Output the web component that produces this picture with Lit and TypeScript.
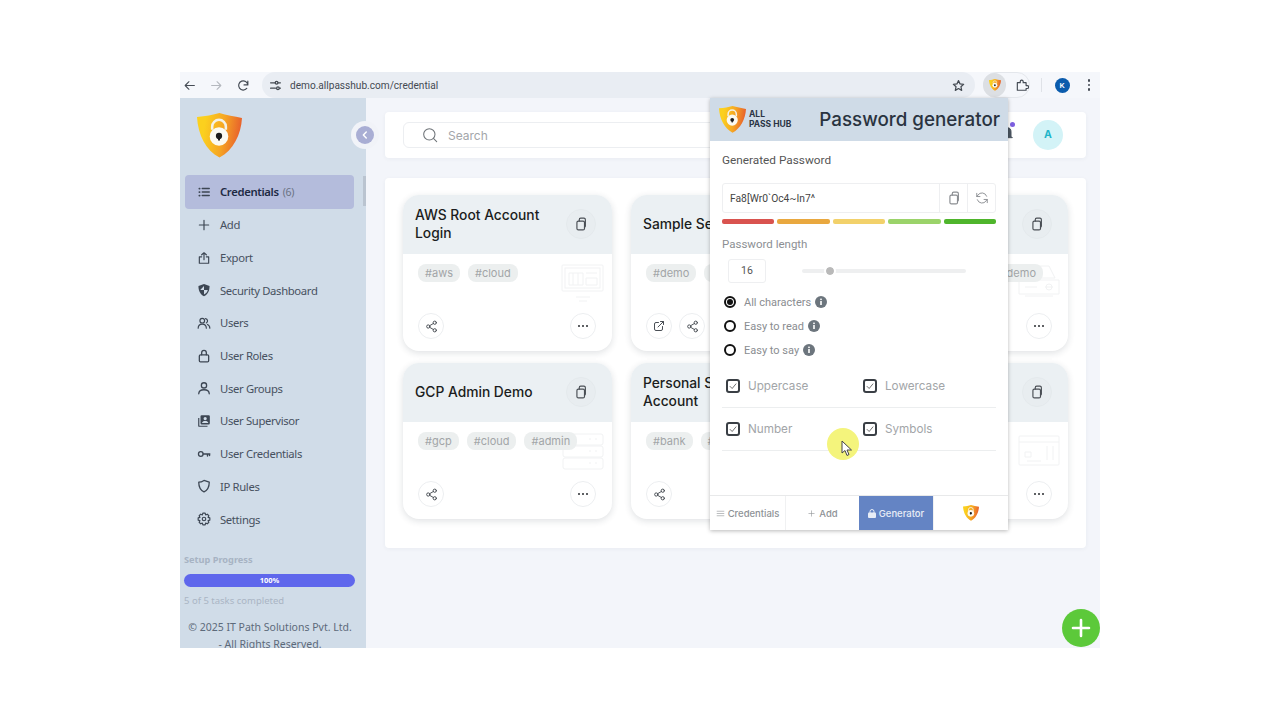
import {LitElement, html, css, svg} from 'lit';
import {customElement} from 'lit/decorators.js';

const stroke = (body: unknown, size = 14, w = 1.6) => html`<svg width=${size} height=${size} viewBox="0 0 24 24" fill="none" stroke="currentColor" stroke-width=${w} stroke-linecap="round" stroke-linejoin="round">${body}</svg>`;

const logo = (w: number) => html`<svg width=${w} height=${w} viewBox="0 0 46 46">
  <defs><linearGradient id="sh" x1="0" y1="0" x2="1" y2="0.15"><stop offset="0.2" stop-color="#fbd01e"/><stop offset="0.62" stop-color="#f6a623"/><stop offset="1" stop-color="#e8622c"/></linearGradient></defs>
  <path d="M0 4C9 3.500 16 2 23 0C30 2 38 3.500 46 5C45 22 37 38 23 45.500C9 38 1 22 0 4Z" fill="url(#sh)"/>
  <path d="M15.500 17V14A7 7 0 0 1 29.500 14V17" fill="none" stroke="#f4f1e6" stroke-width="2.600"/>
  <circle cx="22.500" cy="24" r="9.500" fill="#fbfaf2"/>
  <circle cx="22.500" cy="23.500" r="3.200" fill="#1c1c1c"/>
  <path d="M21.500 24h2v4h-2z" fill="#1c1c1c"/>
</svg>`;

const copyIcon = stroke(svg`<rect x="5" y="7" width="13" height="15" rx="2.500"/><path d="M9 7V4.500A2.500 2.500 0 0 1 11.500 2H17A2.500 2.500 0 0 1 19.500 4.500V15A2.500 2.500 0 0 1 18 17.500"/>`, 14, 2);
const shareIcon = stroke(svg`<circle cx="18" cy="5" r="3"/><circle cx="6" cy="12" r="3"/><circle cx="18" cy="19" r="3"/><path d="M8.600 10.500L15.400 6.500M8.600 13.500L15.400 17.500"/>`, 13, 1.8);
const openIcon = stroke(svg`<path d="M11 5H6A3 3 0 0 0 3 8V18A3 3 0 0 0 6 21H16A3 3 0 0 0 19 18V13"/><path d="M10 14L21 3M15 3H21V9"/>`, 12, 2);
const infoIcon = html`<svg width="12" height="12" viewBox="0 0 12 12"><circle cx="6" cy="6" r="6" fill="#6c757d"/><rect x="5.200" y="5" width="1.600" height="4" fill="#fff"/><rect x="5.200" y="2.600" width="1.600" height="1.500" fill="#fff"/></svg>`;

const navItems = [
  {label: 'Credentials', count: '(6)', icon: stroke(svg`<path d="M9 6H21M9 12H21M9 18H21" stroke-width="2.400"/><path d="M4 6H4.500M4 12H4.500M4 18H4.500" stroke-width="3"/>`)},
  {label: 'Add', icon: stroke(svg`<path d="M12 4V20M4 12H20" stroke-width="2"/>`)},
  {label: 'Export', icon: stroke(svg`<path d="M8 10H4V21H20V10H16M12 15V3M8 6.500L12 3L16 6.500" stroke-width="2"/>`)},
  {label: 'Security Dashboard', icon: html`<svg width="14" height="14" viewBox="0 0 24 24"><path d="M12 1.500L21.500 5C21.500 13 19 19 12 22.500C5 19 2.500 13 2.500 5Z" fill="#3c4653"/><path d="M12 5V12H5.500M12 12H18.500C18 15 16 17.500 12 19.500Z" fill="#d0dce8"/></svg>`},
  {label: 'Users', icon: stroke(svg`<circle cx="9" cy="8" r="4"/><path d="M2 21C2 16 5 14 9 14C13 14 16 16 16 21M14.500 4.500A4 4 0 0 1 16 12M18 14.500C20.500 15.500 22 17.500 22 21"/>`, 14, 2)},
  {label: 'User Roles', icon: stroke(svg`<rect x="4" y="10" width="16" height="12" rx="2"/><path d="M8 10V6.500A4 4 0 0 1 16 6.500V10"/>`, 14, 2.200)},
  {label: 'User Groups', icon: stroke(svg`<circle cx="12" cy="7.500" r="4.500"/><path d="M3 22C3 16.500 7 15 12 15C17 15 21 16.500 21 22"/>`, 14, 2.200)},
  {label: 'User Supervisor', icon: html`<svg width="14" height="14" viewBox="0 0 24 24"><path d="M2 7H4V20H18V22H4A2 2 0 0 1 2 20Z" fill="#3c4653"/><path fill-rule="evenodd" d="M8 2H20A2 2 0 0 1 22 4V16A2 2 0 0 1 20 18H8A2 2 0 0 1 6 16V4A2 2 0 0 1 8 2ZM14 5A2.800 2.800 0 1 0 14 10.600A2.800 2.800 0 1 0 14 5ZM8.500 15.500H19.500C19 12.800 17 11.800 14 11.800C11 11.800 9 12.800 8.500 15.500Z" fill="#3c4653"/></svg>`},
  {label: 'User Credentials', icon: stroke(svg`<circle cx="6.500" cy="12" r="4"/><path d="M10.500 12H22M18 12V15.500M21.500 12V14.500" stroke-width="2.400"/>`, 14, 2.200)},
  {label: 'IP Rules', icon: stroke(svg`<path d="M12 2.500L21 5.500C21 13 18.500 19 12 22C5.500 19 3 13 3 5.500C6 5.500 9 4.500 12 2.500Z"/>`, 14, 2.200)},
  {label: 'Settings', icon: stroke(svg`<circle cx="12" cy="12" r="3"/><path d="M10 2H14L14.800 5L17.600 3.700L20.300 6.400L19 9.200L22 10V14L19 14.800L20.300 17.600L17.600 20.300L14.800 19L14 22H10L9.200 19L6.400 20.300L3.700 17.600L5 14.800L2 14V10L5 9.200L3.700 6.400L6.400 3.700L9.200 5Z"/>`, 14, 2)},
];

const artLaptop = html`<svg width="44" height="40" viewBox="0 0 44 40" fill="none" stroke="#f1f2f3"><rect x="1" y="1" width="41" height="26" rx="1"/><rect x="4" y="4" width="35" height="20"/><path d="M8 9H22V21H8ZM25 9H36M25 14H36V21H25ZM12 9V21M17 9V21M15 33H29M18 37H26"/></svg>`;
const artServer = html`<svg width="44" height="40" viewBox="0 0 44 40" fill="none" stroke="#f1f2f3"><rect x="2" y="2" width="40" height="11" rx="2"/><rect x="2" y="14" width="40" height="11" rx="2"/><rect x="2" y="26" width="40" height="11" rx="2"/><path d="M28 7H30M34 7H36M28 19H30M34 19H36M28 31H30M34 31H36"/></svg>`;
const artBox = html`<svg width="44" height="40" viewBox="0 0 44 40" fill="none" stroke="#f1f2f3"><path d="M10 2H32L38 14H6ZM2 16H42V30H2ZM8 32H36M28 23H36M8 23H20"/><circle cx="32" cy="23" r="3"/></svg>`;
const artCard = html`<svg width="44" height="40" viewBox="0 0 44 40" fill="none" stroke="#f1f2f3"><rect x="2" y="4" width="40" height="29" rx="1"/><path d="M2 10H42M8 20H14V25H8ZM30 14V28M36 14V28M10 29H24"/></svg>`;

// third column sits behind the popup, only its right edge shows
const cards = [
  {title: 'AWS Root Account Login', tags: ['#aws', '#cloud'], art: artLaptop},
  {title: 'Sample Server', tags: ['#demo', '#test'], art: artLaptop, open: true},
  {title: '', tags: ['#demo'], art: artBox, tagsEnd: true},
  {title: 'GCP Admin Demo', tags: ['#gcp', '#cloud', '#admin'], art: artServer},
  {title: 'Personal SBI Account', tags: ['#bank', '#sbi'], art: artCard},
  {title: '', tags: [], art: artCard},
];

@customElement('app-root')
export class AppRoot extends LitElement {
  static styles = css`
    :host {
      display: block;
      box-sizing: border-box;
      width: 1280px;
      height: 720px;
      padding: 72px 180px;
      background: #fff;
      font-family: "Noto Sans", sans-serif;
    }
    * { box-sizing: border-box; }
    svg { display: block; flex: none; }

    .window { position: relative; height: 576px; display: flex; flex-direction: column; overflow: hidden; }

    .toolbar { height: 26px; flex: none; display: flex; align-items: center; background: #f5f7fb; color: #444b54; }
    .tb-btn { width: 18px; height: 18px; margin-right: 9px; display: flex; align-items: center; justify-content: center; }
    .tb-btn.off { color: #b4b8be; }
    .url { flex: 1; height: 26px; margin-left: 1px; padding: 0 10.500px 0 7px; border-radius: 13px; background: #e9edf3; display: flex; align-items: center; font: 10.100px Roboto, sans-serif; color: #444a52; }
    .url .tune { margin-right: 8px; }
    .url .star { margin-left: auto; }
    .ext { width: 47px; height: 26px; margin-left: 8px; border: 1px solid #e4e7ec; border-radius: 13px; display: flex; align-items: center; gap: 9px; }
    .ext-logo { width: 24px; height: 24px; margin-left: -1px; border-radius: 50%; background: #dcdfe3; display: flex; align-items: center; justify-content: center; }
    .sep { width: 1px; height: 14px; margin-left: 11px; background: #dfe2e7; }
    .kbadge { width: 15px; height: 15px; margin-left: 12.500px; border-radius: 50%; background: #0b5cad; color: #fff; font: 500 8px/15px Roboto, sans-serif; text-align: center; }
    .dots { width: 3px; margin: 0 9.500px 0 18px; display: flex; flex-direction: column; gap: 2px; }
    .dots i { width: 2.500px; height: 2.500px; border-radius: 50%; background: #444b54; }

    .page { flex: 1; min-height: 0; display: flex; background: #f3f5fa; }

    aside { width: 186px; flex: none; padding-top: 15px; background: #d0dce8; display: flex; flex-direction: column; position: relative; }
    .brand { height: 45px; margin-left: 17px; }
    nav { margin-top: 17px; display: flex; flex-direction: column; }
    .item { width: 169px; height: 32.700px; margin-left: 5px; padding-left: 12px; display: flex; align-items: center; gap: 9px; font-size: 11.300px; letter-spacing: -.35px; color: #47515f; }
    .item svg { color: #3c4653; }
    .item.active { height: 33.500px; background: #b4bcdc; border-radius: 4px; color: #1e2a44; font-weight: 600; }
    .item .count { margin-left: -5px; font-weight: 400; font-size: 10.500px; color: #6a7283; }
    .thumb { position: absolute; left: 183px; top: 78px; width: 3px; height: 30px; background: #bac4d0; }

    .setup { margin: 18px 11px 0 4px; }
    .setup-label { font-size: 9.200px; font-weight: 700; line-height: 14px; color: #a7b3c3; }
    .bar { height: 13px; margin-top: 7px; border-radius: 7px; background: #5f67ec; color: #fff; font-size: 7.500px; font-weight: 700; line-height: 13px; text-align: center; }
    .setup-note { margin-top: 7px; font-size: 9.500px; line-height: 14px; color: #aab5c4; }
    .copy { margin-top: 11px; padding-right: 6px; font-size: 10.500px; line-height: 17px; text-align: center; color: #5d6a7a; }

    main { flex: 1; min-width: 0; padding: 14px 14px 0 19px; display: flex; flex-direction: column; gap: 20px; }
    .topbar { height: 46px; padding: 10px 23px 10px 18px; background: #fff; border-radius: 4px; box-shadow: 0 1px 4px rgba(40, 50, 70, .05); display: flex; align-items: center; }
    .search { flex: 1; height: 26px; padding-left: 18px; border: 1px solid #eceef1; border-radius: 6px; display: flex; align-items: center; gap: 10px; font: 12px Inter, sans-serif; color: #a3a6aa; }
    .search svg { color: #6f7479; }
    .bell { position: relative; margin: -5px 20px 0 13px; width: 14px; height: 16px; color: #4a5560; }
    .bell b { position: absolute; right: -2px; top: -3px; width: 5px; height: 5px; border-radius: 50%; background: #7d5fe0; }
    .avatar { width: 30px; height: 30px; border-radius: 50%; background: #d3f3f7; color: #1fb5c9; font: 700 10.500px/30px Inter, sans-serif; text-align: center; }

    .panel { padding: 17px 18px 29px; background: #fff; border-radius: 4px; box-shadow: 0 1px 4px rgba(40, 50, 70, .05); display: grid; grid-template-columns: repeat(3, 209px); gap: 12px 19px; }
    .card { position: relative; height: 156px; border-radius: 16px; overflow: hidden; background: #fff; box-shadow: 0 2px 7px rgba(30, 40, 60, .14); }
    .card-head { height: 58.500px; padding: 0 16px 0 12px; background: #ebf0f3; display: flex; align-items: center; justify-content: space-between; }
    .card-title { max-width: 135px; font: 500 13.800px/18px Inter, sans-serif; color: #1b1d20; }
    .round { width: 26px; height: 26px; border: 1px solid #eceef0; border-radius: 50%; background: #fff; color: #4a4f55; display: flex; align-items: center; justify-content: center; }
    .copy-btn { width: 30px; height: 30px; border-radius: 50%; background: #e8edf0; border: 1px solid #e4e9ec; color: #4a4f55; display: flex; align-items: center; justify-content: center; }
    .tags { position: relative; padding: 10px 0 0 15px; display: flex; gap: 8px; }
    .tags.end { justify-content: flex-end; padding-right: 25px; }
    .tag { height: 18px; padding: 0 7px; border-radius: 8px; background: #ecefef; font: 11px/18px Inter, sans-serif; color: #a2a5a7; }
    .art { position: absolute; right: 7px; top: 69px; }
    .actions { position: absolute; left: 15px; right: 16px; bottom: 12px; display: flex; gap: 7px; }
    .actions .more { margin-left: auto; }
    .more-dots { display: flex; gap: 1.500px; }
    .more-dots i { width: 2.500px; height: 2.500px; border-radius: 50%; background: #2a2d31; }

    .collapse { position: absolute; left: 171px; top: 49px; width: 28px; height: 28px; padding: 5px; border-radius: 50%; background: #f1f3f8; }
    .collapse div { width: 18px; height: 18px; border-radius: 50%; background: #a9aed4; color: #fff; display: flex; align-items: center; justify-content: center; }

    .fab { position: absolute; right: 0; bottom: 1px; width: 38px; height: 38px; border-radius: 50%; background: #5cc93a; color: #fff; display: flex; align-items: center; justify-content: center; }

    .popup { position: absolute; left: 530px; top: 26px; width: 298px; height: 432px; background: #fff; box-shadow: 0 1px 4px rgba(0, 0, 0, .28); display: flex; flex-direction: column; }
    .pop-head { height: 43px; flex: none; padding: 0 8px 0 9px; background: #cfdbe7; display: flex; align-items: center; }
    .pop-brand { margin-left: 3px; font: 700 8.500px/9.500px Inter, sans-serif; color: #2a3444; }
    .pop-title { margin-left: auto; font: 500 18.800px Inter, sans-serif; color: #2a3340; }
    .pop-body { flex: 1; padding: 0 12px; display: flex; flex-direction: column; }
    .lbl { font: 11.800px/14px Roboto, sans-serif; color: #555; }
    .gen { margin-top: 12px; }
    .pw { height: 30px; margin-top: 16px; border: 1px solid #eeeff1; border-radius: 3px; display: flex; align-items: center; }
    .pw-value { flex: 1; padding-left: 7px; font: 10.300px Roboto, sans-serif; color: #444; }
    .pw-btn { width: 28px; height: 28px; border-left: 1px solid #eeeff1; color: #8a8d91; display: flex; align-items: center; justify-content: center; }
    .strength { height: 5px; margin-top: 6px; display: flex; gap: 3px; }
    .strength i { flex: 1; border-radius: 2px; }
    .len { margin-top: 13px; font-size: 11.500px; color: #8c8f93; }
    .len-row { height: 24px; margin-top: 8px; padding-left: 6px; display: flex; align-items: center; }
    .len-box { width: 38px; height: 24px; border: 1px solid #eeeff1; border-radius: 3px; font: 10.500px/22px Roboto, sans-serif; text-align: center; color: #555; }
    .slider { position: relative; width: 164px; height: 4px; margin-left: 36px; background: #eeeff0; border-radius: 2px; }
    .slider b { position: absolute; left: 24px; top: -2px; width: 8px; height: 8px; border-radius: 50%; background: #b9b9b9; outline: 2px solid #fff; }
    .radios { margin-top: 7px; display: flex; flex-direction: column; }
    .radio { height: 24px; padding-left: 2px; display: flex; align-items: center; font: 11px Roboto, sans-serif; color: #8a8d91; }
    .radio .dot { width: 12px; height: 12px; margin-right: 8px; border: 2px solid #111; border-radius: 50%; padding: 1px; }
    .radio .dot.on::after { content: ""; display: block; width: 6px; height: 6px; border-radius: 50%; background: #111; }
    .radio svg { margin-left: 4px; }
    .checks { margin-top: 3px; display: grid; grid-template-columns: 1fr 1fr; }
    .check { height: 43px; padding: 14px 0 0 4px; display: flex; align-items: flex-start; gap: 8px; font: 11.700px/14px Inter, sans-serif; color: #a2a5a8; border-bottom: 1px solid #eceeef; }
    .box { width: 14px; height: 14px; border: 2px solid #3a3f45; border-radius: 3px; display: flex; align-items: center; justify-content: center; color: #555; }
    .tabs { height: 35px; flex: none; border-top: 1px solid #e8e9ea; display: grid; grid-template-columns: 75px 74px 74px 75px; font: 500 9.500px Inter, sans-serif; color: #8e9296; }
    .tab { display: flex; align-items: center; justify-content: center; gap: 3px; }
    .tab + .tab { border-left: 1px solid #f0f1f2; }
    .tab.on { background: #6484c4; color: #e8edf6; border-left: 0; }

    .cursor { position: absolute; left: 647px; top: 356px; width: 32px; height: 32px; border-radius: 50%; background: #f4f47c; }
    .cursor svg { position: absolute; left: 14px; top: 12px; }
  `;

  private renderCard(c: (typeof cards)[number]) {
    return html`<div class="card">
      <div class="card-head">
        <div class="card-title">${c.title}</div>
        <div class="copy-btn">${copyIcon}</div>
      </div>
      <div class="art">${c.art}</div>
      <div class="tags ${c.tagsEnd ? 'end' : ''}">${c.tags.map((t) => html`<span class="tag">${t}</span>`)}</div>
      <div class="actions">
        ${c.open ? html`<div class="round">${openIcon}</div>` : ''}
        <div class="round">${shareIcon}</div>
        <div class="round more"><div class="more-dots"><i></i><i></i><i></i></div></div>
      </div>
    </div>`;
  }

  private renderPopup() {
    const radios = ['All characters', 'Easy to read', 'Easy to say'];
    const checks = ['Uppercase', 'Lowercase', 'Number', 'Symbols'];
    const colors = ['#d9534f', '#e9a83f', '#f2d16b', '#9bd36a', '#4fb52c'];
    return html`<div class="popup">
      <div class="pop-head">
        ${logo(27)}
        <div class="pop-brand">ALL<br />PASS HUB</div>
        <div class="pop-title">Password generator</div>
      </div>
      <div class="pop-body">
        <div class="lbl gen">Generated Password</div>
        <div class="pw">
          <div class="pw-value">Fa8[Wr0\`Oc4~In7^</div>
          <div class="pw-btn">${copyIcon}</div>
          <div class="pw-btn">${stroke(svg`<path d="M20 9A8.500 8.500 0 0 0 5 7L3 9.500M4 15A8.500 8.500 0 0 0 19 17L21 14.500M3 4V9.500H8.500M21 20V14.500H15.500"/>`)}</div>
        </div>
        <div class="strength">${colors.map((c) => html`<i style="background:${c}"></i>`)}</div>
        <div class="lbl len">Password length</div>
        <div class="len-row">
          <div class="len-box">16</div>
          <div class="slider"><b></b></div>
        </div>
        <div class="radios">
          ${radios.map((r, i) => html`<div class="radio"><span class="dot ${i === 0 ? 'on' : ''}"></span>${r}${infoIcon}</div>`)}
        </div>
        <div class="checks">
          ${checks.map((c) => html`<div class="check"><span class="box">${stroke(svg`<path d="M5 13L10 18L19 7"/>`, 10, 2)}</span>${c}</div>`)}
        </div>
      </div>
      <div class="tabs">
        <div class="tab">${stroke(svg`<path d="M3 6H21M3 12H21M3 18H21"/>`, 9)}Credentials</div>
        <div class="tab">${stroke(svg`<path d="M12 5V19M5 12H19"/>`, 9)}Add</div>
        <div class="tab on"><svg width="8" height="9" viewBox="0 0 8 9"><rect y="3.500" width="8" height="5.500" rx="1" fill="#e8edf6"/><path d="M2 4V2.500A2 2 0 0 1 6 2.500V4" fill="none" stroke="#e8edf6"/></svg>Generator</div>
        <div class="tab">${logo(16)}</div>
      </div>
    </div>`;
  }

  render() {
    return html`<div class="window">
      <div class="toolbar">
        <div class="tb-btn">${stroke(svg`<path d="M21 12H4M11 5L4 12L11 19"/>`, 13, 2)}</div>
        <div class="tb-btn off">${stroke(svg`<path d="M3 12H20M13 5L20 12L13 19"/>`, 13, 2)}</div>
        <div class="tb-btn">${stroke(svg`<path d="M20 11A8.500 8.500 0 1 0 18 17.500M20 4V11H13"/>`, 13, 2.200)}</div>
        <div class="url">
          <span class="tune">${stroke(svg`<path d="M3 7H11M3 17H12M17 7H21M20 17H21"/><circle cx="14" cy="7" r="2.500"/><circle cx="16.500" cy="17" r="2.500"/>`, 13, 2.400)}</span>
          demo.allpasshub.com/credential
          <span class="star">${stroke(svg`<path d="M12 3L14.800 9L21.500 9.800L16.500 14.300L17.900 21L12 17.600L6.100 21L7.500 14.300L2.500 9.800L9.200 9Z"/>`, 13, 2.200)}</span>
        </div>
        <div class="ext">
          <div class="ext-logo">${logo(12)}</div>
          ${stroke(svg`<path d="M4 8H9V6A2.500 2.500 0 0 1 14 6V8H19V13H21A2.500 2.500 0 0 1 21 18H19V21H4Z"/>`, 14, 2)}
        </div>
        <div class="sep"></div>
        <div class="kbadge">K</div>
        <div class="dots"><i></i><i></i><i></i></div>
      </div>
      <div class="page">
        <aside>
          <div class="brand">${logo(45)}</div>
          <nav>
            ${navItems.map((n, i) => html`<div class="item ${i === 0 ? 'active' : ''}">${n.icon}<span>${n.label}</span>${n.count ? html`<span class="count">${n.count}</span>` : ''}</div>`)}
          </nav>
          <div class="thumb"></div>
          <div class="setup">
            <div class="setup-label">Setup Progress</div>
            <div class="bar">100%</div>
            <div class="setup-note">5 of 5 tasks completed</div>
          </div>
          <div class="copy">© 2025 IT Path Solutions Pvt. Ltd.<br />- All Rights Reserved.</div>
        </aside>
        <main>
          <div class="topbar">
            <div class="search">${stroke(svg`<circle cx="11" cy="11" r="8.500"/><path d="M17.500 17.500L22 22"/>`, 16, 1.600)}Search</div>
            <div class="bell">
              ${stroke(svg`<path d="M6 17V10A6 6 0 0 1 18 10V17L20 19H4Z" fill="currentColor"/>`, 16, 1.500)}
              <b></b>
            </div>
            <div class="avatar">A</div>
          </div>
          <div class="panel">${cards.map((c) => this.renderCard(c))}</div>
        </main>
      </div>
      <div class="collapse"><div>${stroke(svg`<path d="M15 5L8 12L15 19"/>`, 10, 3.500)}</div></div>
      <div class="fab">${stroke(svg`<path d="M12 4V20M4 12H20"/>`, 24, 2.600)}</div>
      ${this.renderPopup()}
      <div class="cursor">
        <svg width="12" height="17" viewBox="0 0 12 17"><path d="M1 1L1 13L4 10.500L6 15.500L8 14.500L6 10H10.500Z" fill="#fff" stroke="#444" stroke-width="1"/></svg>
      </div>
    </div>`;
  }
}
